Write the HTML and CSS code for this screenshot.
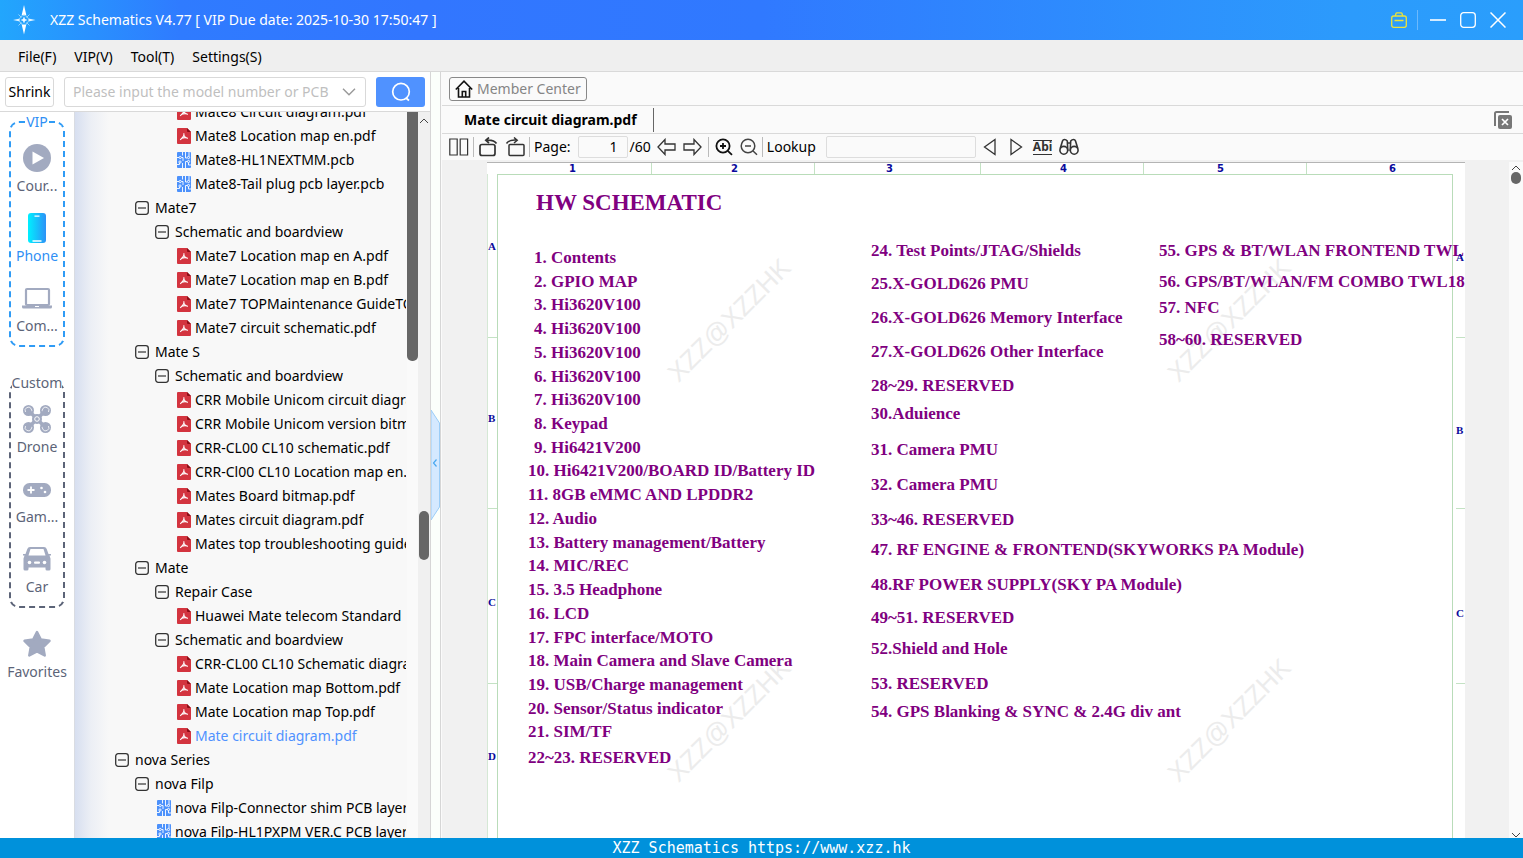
FILE: index.html
```html
<!DOCTYPE html>
<html lang="en">
<head>
<meta charset="utf-8">
<title>XZZ Schematics</title>
<link rel="stylesheet" href="styles.css">
</head>
<body>
<svg class="defs" aria-hidden="true">
  <symbol id="pdf" viewBox="0 0 14 16">
    <path d="M1 0h9l4 4v11a1 1 0 0 1-1 1H1a1 1 0 0 1-1-1V1a1 1 0 0 1 1-1z" fill="#d3343f"/>
    <path d="M10 0l4 4h-3a1 1 0 0 1-1-1z" fill="#8c0d16"/>
    <path d="M6.700 5.200c.8 1.500-.3 3.800-3.500 6.600M7 7.500c.6 1.500 1.800 2.600 3.800 3M4.800 10.200c1.800-.7 3.600-.8 5.500-.3" fill="none" stroke="#fff" stroke-width="1.100"/>
  </symbol>
  <symbol id="pcb" viewBox="0 0 14 16">
    <rect width="14" height="16" rx="1" fill="#4c91fb"/>
    <path d="M5.500 0v3.500M8.500 0v6H10M0 5.500h2M4.500 5.500H6V9M0 12.500h2.500V11M5.500 16v-5M8.500 16V9.500h2M11.500 10.500V13H14M12 4.500V0" fill="none" stroke="#fff" stroke-width=".9"/>
    <g fill="none" stroke="#fff" stroke-width=".9"><circle cx="3.200" cy="5.500" r="1.100"/><circle cx="3" cy="10" r="1.100"/><circle cx="11.500" cy="5.500" r="1.100"/><circle cx="11.500" cy="9.500" r="1.100"/></g>
  </symbol>
  <symbol id="fold" viewBox="0 0 14 14">
    <rect x=".7" y=".7" width="12.600" height="12.600" rx="2.500" fill="none" stroke="#333" stroke-width="1.300"/>
    <path d="M3 7h8" stroke="#333" stroke-width="1.200"/>
  </symbol>
</svg>

<header class="titlebar">
  <svg class="logo" viewBox="0 0 28 30" aria-hidden="true">
    <path d="M14 0l2.400 10.500c-1.500-.9-3.300-.9-4.800 0zM14 29.500l2.400-10.500c-1.500.9-3.300.9-4.800 0z" fill="#fff"/>
    <path d="M3 15l7-1.500v3zM25.500 15l-7-1.500v3z" fill="#dff3ff"/>
    <path d="M8.500 9.500l3 3M19.500 9.500l-3 3M8.500 20.500l3-3M19.500 20.500l-3-3" stroke="#8fd5ff"/>
    <circle cx="14" cy="15" r="4.500" fill="none" stroke="#8fd5ff"/>
    <path d="M14 12.500v5M11.500 15h5" stroke="#fff" stroke-width="1.500"/>
  </svg>
  <h1 class="title">XZZ Schematics V4.77 [ VIP Due date: 2025-10-30 17:50:47 ]</h1>
  <div class="window-tools">
    <button class="win" aria-label="Toolbox"><svg width="16" height="16" viewBox="0 0 16 16" fill="none" stroke="#ece33a" stroke-width="1.300"><rect x=".7" y="4" width="14.600" height="11.300" rx="2"/><path d="M4.300 4L5 1.500Q5.200.8 6 .8h4q.8 0 1 .7l.7 2.500M3.500 8.500h9"/></svg></button>
    <span class="win-rule"></span>
    <button class="win" aria-label="Minimize"><svg width="16" height="16" viewBox="0 0 16 16"><path d="M0 8h16" stroke="#fff" stroke-width="1.600"/></svg></button>
    <button class="win" aria-label="Maximize"><svg width="16" height="16" viewBox="0 0 16 16"><rect x=".7" y=".7" width="14.600" height="14.600" rx="3" fill="none" stroke="#fff" stroke-width="1.300"/></svg></button>
    <button class="win" aria-label="Close"><svg width="16" height="16" viewBox="0 0 16 16"><path d="M.5.500l15 15M15.500.500l-15 15" stroke="#fff" stroke-width="1.500"/></svg></button>
  </div>
</header>

<nav class="menubar" aria-label="Main menu">
  <button>File(F)</button><button>VIP(V)</button><button>Tool(T)</button><button>Settings(S)</button>
</nav>

<main class="workspace">
  <section class="browser">
    <form class="searchbar">
      <button type="button" class="shrink">Shrink</button>
      <div class="combo">
        <input type="text" aria-label="Model number or PCB" placeholder="Please input the model number or PCB">
        <svg width="14" height="8" viewBox="0 0 14 8" aria-hidden="true"><path d="M1 .8l6 6 6-6" fill="none" stroke="#999" stroke-width="1.400"/></svg>
      </div>
      <button type="submit" class="search" aria-label="Search"><svg width="20" height="20" viewBox="0 0 20 20" fill="none" stroke="#fff" stroke-width="1.700"><circle cx="10" cy="9.700" r="8.300"/><path d="M15 16l3 2.500"/></svg></button>
    </form>
    <div class="browser-body">
      <aside class="rail">
        <fieldset class="group group-vip">
          <legend>VIP</legend>
          <button class="cat"><svg viewBox="0 0 28 30"><circle cx="14" cy="15" r="14" fill="#a2aac0"/><path d="M9.500 8.500v13l11.500-6.500z" fill="#fff"/></svg>Cour...</button>
          <button class="cat active"><svg viewBox="0 0 28 30"><defs><linearGradient id="ph"><stop offset="0" stop-color="#00f0ff"/><stop offset="1" stop-color="#2c92f7"/></linearGradient></defs><rect x="5" y="0" width="18" height="30" rx="3" fill="url(#ph)"/><path d="M11.500 3.200h5M9.500 28h9" stroke="#fff" stroke-width="1.300"/></svg>Phone</button>
          <button class="cat"><svg viewBox="0 0 30 30"><rect x="4" y="6" width="23" height="16" rx="1" fill="none" stroke="#a2aac0" stroke-width="2.200"/><path d="M0 22.500h30v1.500a1.500 1.500 0 0 1-1.500 1.500h-27A1.500 1.500 0 0 1 0 24z" fill="#a2aac0"/><path d="M13 23.500h4" stroke="#fff"/></svg>Com...</button>
        </fieldset>
        <fieldset class="group group-custom">
          <legend>Custom</legend>
          <button class="cat"><svg viewBox="0 0 28 30"><g fill="#a2aac0"><circle cx="5.500" cy="6.500" r="5.500"/><circle cx="22.500" cy="6.500" r="5.500"/><circle cx="5.500" cy="23.500" r="5.500"/><circle cx="22.500" cy="23.500" r="5.500"/></g><g fill="none" stroke="#fff" stroke-width=".8"><path d="M2.500 8a3.300 3.300 0 1 1 5 1M25.500 8a3.300 3.300 0 1 0-5 1M2.500 22a3.300 3.300 0 1 0 5-1M25.500 22a3.300 3.300 0 1 1-5-1"/></g><path d="M5.500 6.500l17 17M22.500 6.500l-17 17" stroke="#a2aac0" stroke-width="3.600"/><circle cx="14" cy="15" r="5" fill="#a2aac0"/><circle cx="14" cy="15" r="2.300" fill="none" stroke="#fff"/></svg>Drone</button>
          <button class="cat"><svg viewBox="0 0 28 30"><rect x="0" y="9" width="28" height="14" rx="6.500" fill="#a2aac0"/><path d="M4.500 16h7M8 12.500v7" stroke="#fff" stroke-width="1.800"/><circle cx="18.500" cy="14" r="1.300" fill="#fff"/><circle cx="22" cy="18" r="1.300" fill="#fff"/></svg>Gam...</button>
          <button class="cat"><svg viewBox="0 0 28 30"><path d="M7 3h14q2 0 2.700 2l1.800 5h2.500v1.500h-1.500l1 3V25q0 1.500-1.500 1.500h-2Q22.500 26.500 22.500 25v-1.500h-17V25q0 1.500-1.500 1.500H2Q.5 26.500.5 25V14.500l1-3H0V10h2.500l1.800-5Q5 3 7 3z" fill="#a2aac0"/><path d="M7.500 5h13l2 6.500h-17z" fill="#fff"/><circle cx="6.500" cy="18.500" r="1.800" fill="#fff"/><circle cx="21.500" cy="18.500" r="1.800" fill="#fff"/><rect x="11" y="17.500" width="6" height="2.200" rx="1" fill="#fff"/></svg>Car</button>
        </fieldset>
        <button class="cat favorites"><svg viewBox="0 0 28 30"><path d="M14 3l3.800 7.600 8.700 1.200-6.300 6.200 1.500 8.500-7.700-4-7.700 4 1.500-8.500-6.300-6.200 8.700-1.200z" fill="#a2aac0" stroke="#a2aac0" stroke-width="2.500" stroke-linejoin="round"/></svg>Favorites</button>
      </aside>

      <div class="tree-pane">
        <ul class="tree">
          <li class="d3"><svg class="file"><use href="#pdf"/></svg>Mate8 Circuit diagram.pdf</li>
          <li class="d3"><svg class="file"><use href="#pdf"/></svg>Mate8 Location map en.pdf</li>
          <li class="d3"><svg class="file"><use href="#pcb"/></svg>Mate8-HL1NEXTMM.pcb</li>
          <li class="d3"><svg class="file"><use href="#pcb"/></svg>Mate8-Tail plug pcb layer.pcb</li>
          <li class="d1"><svg class="fold"><use href="#fold"/></svg>Mate7</li>
          <li class="d2"><svg class="fold"><use href="#fold"/></svg>Schematic and boardview</li>
          <li class="d3"><svg class="file"><use href="#pdf"/></svg>Mate7 Location map en A.pdf</li>
          <li class="d3"><svg class="file"><use href="#pdf"/></svg>Mate7 Location map en B.pdf</li>
          <li class="d3"><svg class="file"><use href="#pdf"/></svg>Mate7 TOPMaintenance GuideTOP.pdf</li>
          <li class="d3"><svg class="file"><use href="#pdf"/></svg>Mate7 circuit schematic.pdf</li>
          <li class="d1"><svg class="fold"><use href="#fold"/></svg>Mate S</li>
          <li class="d2"><svg class="fold"><use href="#fold"/></svg>Schematic and boardview</li>
          <li class="d3"><svg class="file"><use href="#pdf"/></svg>CRR Mobile Unicom circuit diagram.pdf</li>
          <li class="d3"><svg class="file"><use href="#pdf"/></svg>CRR Mobile Unicom version bitmap.pdf</li>
          <li class="d3"><svg class="file"><use href="#pdf"/></svg>CRR-CL00 CL10 schematic.pdf</li>
          <li class="d3"><svg class="file"><use href="#pdf"/></svg>CRR-Cl00 CL10 Location map en.pdf</li>
          <li class="d3"><svg class="file"><use href="#pdf"/></svg>Mates Board bitmap.pdf</li>
          <li class="d3"><svg class="file"><use href="#pdf"/></svg>Mates circuit diagram.pdf</li>
          <li class="d3"><svg class="file"><use href="#pdf"/></svg>Mates top troubleshooting guide.pdf</li>
          <li class="d1"><svg class="fold"><use href="#fold"/></svg>Mate</li>
          <li class="d2"><svg class="fold"><use href="#fold"/></svg>Repair Case</li>
          <li class="d3"><svg class="file"><use href="#pdf"/></svg>Huawei Mate telecom Standard</li>
          <li class="d2"><svg class="fold"><use href="#fold"/></svg>Schematic and boardview</li>
          <li class="d3"><svg class="file"><use href="#pdf"/></svg>CRR-CL00 CL10 Schematic diagram.pdf</li>
          <li class="d3"><svg class="file"><use href="#pdf"/></svg>Mate Location map Bottom.pdf</li>
          <li class="d3"><svg class="file"><use href="#pdf"/></svg>Mate Location map Top.pdf</li>
          <li class="d3 current"><svg class="file"><use href="#pdf"/></svg>Mate circuit diagram.pdf</li>
          <li class="d0"><svg class="fold"><use href="#fold"/></svg>nova Series</li>
          <li class="d1"><svg class="fold"><use href="#fold"/></svg>nova Filp</li>
          <li class="d2"><svg class="file"><use href="#pcb"/></svg>nova Filp-Connector shim PCB layer.pcb</li>
          <li class="d2"><svg class="file"><use href="#pcb"/></svg>nova Filp-HL1PXPM VER.C PCB layer.pcb</li>
        </ul>
      </div>
      <div class="scroll-inner"></div>
      <div class="scroll-outer">
        <svg width="10" height="6" viewBox="0 0 10 6"><path d="M1 5l4-4 4 4" fill="none" stroke="#444"/></svg>
        <span class="thumb"></span>
      </div>
    </div>
  </section>

  <div class="splitter">
    <button class="collapse" aria-label="Collapse panel"><svg width="9" height="110" viewBox="0 0 9 110"><path d="M0 0l8.500 13v84L0 110z" fill="#d5e9ff" stroke="#9bcdf7"/><path d="M5.500 49.500l-3 3.500 3 3.500" fill="none" stroke="#4aa8f0" stroke-width="1.200"/></svg></button>
  </div>

  <section class="viewer">
    <div class="memberbar">
      <button class="member"><svg width="18" height="18" viewBox="0 0 18 18" fill="none" stroke="#111" stroke-width="1.600"><path d="M.8 9.500L9 1.200l8.200 8.300M3.500 8v9h11V8M7.300 17v-5.500h3.400V17"/></svg>Member Center</button>
    </div>
    <div class="tabs">
      <button class="tab">Mate circuit diagram.pdf</button>
      <button class="tab-close" aria-label="Close all tabs"><svg width="18" height="18" viewBox="0 0 18 18"><path d="M1 15V2.500Q1 1 2.500 1H15" fill="none" stroke="#777" stroke-width="2"/><rect x="4" y="4" width="14" height="14" rx="2" fill="#777"/><path d="M8 8l6 6M14 8l-6 6" stroke="#fff" stroke-width="1.700"/></svg></button>
    </div>
    <div class="toolbar">
      <button class="tool" aria-label="Two pages"><svg width="20" height="18" viewBox="0 0 20 18" fill="none" stroke="#333" stroke-width="1.200"><path d="M.8 1h7.400v16H.8zM11.200 1h7.400v16h-7.400z"/></svg></button>
      <span class="rule"></span>
      <button class="tool" aria-label="Rotate left"><svg width="20" height="20" viewBox="0 0 20 20" fill="none" stroke="#333" stroke-width="1.700"><rect x="2" y="7.500" width="15" height="11" rx="2"/><path d="M18.500 6.500Q16 2.500 8 3.200M11 .5L7.800 3.200l3.200 2.800"/></svg></button>
      <button class="tool" aria-label="Rotate right"><svg width="20" height="20" viewBox="0 0 20 20" fill="none" stroke="#333" stroke-width="1.500"><rect x="4" y="7.500" width="15" height="11" rx="1"/><path d="M1.500 6.500Q4 2.500 12 3.200M9 .5l3.200 2.700L9 6"/></svg></button>
      <span class="rule"></span>
      <label class="page-label" for="page">Page:</label>
      <input class="page" id="page" type="text" value="1">
      <span class="total">/60</span>
      <button class="tool" aria-label="Previous page"><svg width="19" height="18" viewBox="0 0 19 18" fill="none" stroke="#333" stroke-width="1.300"><path d="M1 9l7-7.500V6h10v6H8v4.500z"/></svg></button>
      <button class="tool" aria-label="Next page"><svg width="19" height="18" viewBox="0 0 19 18" fill="none" stroke="#333" stroke-width="1.300"><path d="M18 9l-7-7.500V6H1v6h10v4.500z"/></svg></button>
      <span class="rule rule-wide"></span>
      <button class="tool" aria-label="Zoom in"><svg width="18" height="18" viewBox="0 0 18 18" fill="none" stroke="#111" stroke-width="1.800"><circle cx="8" cy="8" r="6.600"/><path d="M12.800 12.800l4.200 4M5 8h6M8 5v6"/></svg></button>
      <button class="tool" aria-label="Zoom out"><svg width="18" height="18" viewBox="0 0 18 18" fill="none" stroke="#444" stroke-width="1.500"><circle cx="8" cy="8" r="6.800"/><path d="M12.800 12.800l4.200 4M5 8h6"/></svg></button>
      <span class="rule"></span>
      <label class="lookup-label" for="lookup">Lookup</label>
      <input class="lookup" id="lookup" type="text">
      <button class="tool" aria-label="Find previous"><svg width="14" height="18" viewBox="0 0 14 18"><path d="M12 1.500v15L1.500 9z" fill="none" stroke="#333" stroke-width="1.300"/></svg></button>
      <button class="tool find-next" aria-label="Find next"><svg width="14" height="18" viewBox="0 0 14 18"><path d="M2 1.500v15L12.500 9z" fill="none" stroke="#333" stroke-width="1.300"/></svg></button>
      <button class="tool whole-word">Abi</button>
      <button class="tool" aria-label="Find"><svg width="20" height="18" viewBox="0 0 20 18" fill="none" stroke="#333" stroke-width="1.600"><circle cx="4.800" cy="12.300" r="3.900"/><circle cx="15.200" cy="12.300" r="3.900"/><path d="M1.200 10.500L3.500 3q.5-1.500 2-1.500T8.300 3l.5 10M18.800 10.500L16.500 3q-.5-1.500-2-1.500T11.700 3l-.5 10M8.500 5h3"/></svg></button>
    </div>
    <div class="canvas">
      <article class="sheet">
        <div class="cols"><span>1</span><span>2</span><span>3</span><span>4</span><span>5</span><span>6</span></div>
        <div class="rows rows-left"><span>A</span><span>B</span><span>C</span><span>D</span></div>
        <div class="frame">
          <span class="mark m1">XZZ@XZZHK</span><span class="mark m2">XZZ@XZZHK</span><span class="mark m3">XZZ@XZZHK</span><span class="mark m4">XZZ@XZZHK</span>
          <h2 class="sheet-title">HW SCHEMATIC</h2>
          <div class="contents">
            <div class="list-a">
              <ul class="even">
                <li class="one">1. Contents</li><li class="one">2. GPIO MAP</li><li class="one">3. Hi3620V100</li><li class="one">4. Hi3620V100</li><li class="one">5. Hi3620V100</li><li class="one">6. Hi3620V100</li><li class="one">7. Hi3620V100</li><li class="one">8. Keypad</li><li class="one">9. Hi6421V200</li>
                <li>10. Hi6421V200/BOARD ID/Battery ID</li><li>11. 8GB eMMC AND LPDDR2</li><li>12. Audio</li><li>13. Battery management/Battery</li><li>14. MIC/REC</li><li>15. 3.5 Headphone</li><li>16. LCD</li><li>17. FPC interface/MOTO</li><li>18. Main Camera and Slave Camera</li><li>19. USB/Charge management</li><li>20. Sensor/Status indicator</li><li>21. SIM/TF</li>
              </ul>
              <p>22~23. RESERVED</p>
            </div>
            <ul class="list-b">
              <li>24. Test Points/JTAG/Shields</li><li>25.X-GOLD626 PMU</li><li>26.X-GOLD626 Memory Interface</li><li>27.X-GOLD626 Other Interface</li><li>28~29. RESERVED</li><li>30.Aduience</li><li>31. Camera PMU</li><li>32. Camera PMU</li><li>33~46. RESERVED</li><li>47. RF ENGINE &amp; FRONTEND(SKYWORKS PA Module)</li><li>48.RF POWER SUPPLY(SKY PA Module)</li><li>49~51. RESERVED</li><li>52.Shield and Hole</li><li>53. RESERVED</li><li>54. GPS Blanking &amp; SYNC &amp; 2.4G div ant</li>
            </ul>
            <ul class="list-c">
              <li>55. GPS &amp; BT/WLAN FRONTEND TWL</li><li>56. GPS/BT/WLAN/FM COMBO TWL18</li><li>57. NFC</li><li>58~60. RESERVED</li>
            </ul>
          </div>
        </div>
        <div class="rows rows-right"><span>A</span><span>B</span><span>C</span><span></span></div>
      </article>
      <div class="view-scroll">
        <svg width="10" height="6" viewBox="0 0 10 6"><path d="M1 5l4-4 4 4" fill="none" stroke="#444"/></svg>
        <span class="dot"></span>
        <svg class="down" width="10" height="6" viewBox="0 0 10 6"><path d="M1 1l4 4 4-4" fill="none" stroke="#444"/></svg>
      </div>
    </div>
  </section>
</main>

<footer class="status">XZZ Schematics https://www.xzz.hk</footer>
</body>
</html>
```
FILE: styles.css
```css
* { box-sizing: border-box; }
html, body { height: 100%; }
body {
  margin: 0;
  display: flex;
  flex-direction: column;
  overflow: hidden;
  background: #fafafa;
  color: #000;
  font: 14px/24px "Noto Sans", "Open Sans", sans-serif;
}
button, input { font: inherit; color: inherit; }
button { padding: 0; border: 0; background: none; cursor: pointer; white-space: nowrap; }
ul { margin: 0; padding: 0; list-style: none; }
svg { display: block; flex: none; }
.defs { position: absolute; width: 0; height: 0; }

/* Title bar */
.titlebar {
  flex: none;
  display: flex;
  align-items: center;
  height: 40px;
  padding: 0 17px 0 10px;
  background: linear-gradient(90deg, #22a6fd 0, #2f7bff 180px, #3276ff 420px, #3079ff 760px, #2c9bfc 1350px, #2a9efc 100%);
  color: #fff;
}
.logo { width: 28px; height: 30px; }
.title { flex: 1; margin: 0 0 0 12px; font-size: 14px; font-weight: 400; }
.window-tools { display: flex; align-items: center; gap: 14px; }
.win-rule { width: 1px; height: 20px; margin: 0 -2px 0 -4px; background: #6cb9fd; }

/* Menu bar */
.menubar {
  flex: none;
  display: flex;
  gap: 18px;
  height: 32px;
  padding: 2px 18px 0;
  border-bottom: 1px solid #d9d9d9;
  background: #efefef;
}

.workspace { flex: 1; display: flex; min-height: 0; }

/* Left panel */
.browser { flex: none; width: 431px; display: flex; flex-direction: column; border-right: 1px solid #d6d6d6; }
.searchbar {
  flex: none;
  display: flex;
  align-items: center;
  gap: 10px;
  height: 40px;
  padding: 0 5px;
  border-bottom: 1px solid #d9d9d9;
  background: #fff;
}
.shrink { width: 49px; height: 30px; border: 1px solid #d9d9d9; border-radius: 3px; background: #fff; }
.combo {
  flex: 1;
  display: flex;
  align-items: center;
  gap: 6px;
  min-width: 0;
  height: 30px;
  padding: 0 9px 0 8px;
  border: 1px solid #d9d9d9;
  border-radius: 3px;
}
.combo input { flex: 1; min-width: 0; padding: 0; border: 0; outline: 0; background: none; }
.combo input::placeholder { color: #bfbfbf; opacity: 1; }
.search { display: grid; place-items: center; width: 49px; height: 30px; border-radius: 3px; background: #5092ff; }
.browser-body { flex: 1; display: flex; min-height: 0; }

.rail { flex: none; width: 74px; padding: 0 9px; background: #fff; color: #5c6478; }
.group { display: flex; flex-direction: column; min-width: 0; margin: 0; padding: 0 0 3px; border: 2px dashed; border-radius: 10px; }
.group legend { margin: 0 auto; padding: 0; line-height: 20px; color: inherit; }
.group-vip { border-color: #2f9bf5; }
.group-vip legend { color: #2f8ff5; }
.group-custom { margin-top: 26px; border-color: #5c6478; }
.cat { display: flex; flex-direction: column; align-items: center; gap: 1px; width: 100%; height: 70px; padding-top: 11px; }
.cat svg { width: 30px; height: 30px; }
.active { color: #2f8ff5; }
.favorites { margin-top: 10px; }

.tree-pane { flex: 1; min-width: 0; overflow: hidden; padding-left: 40px; border-left: 1px solid #d9dce2; background: linear-gradient(90deg, #d7dff0 0, #eceff5 16px, #f8f8f8 34px); }
.tree { margin-top: -12px; }
.tree li { display: flex; align-items: center; gap: 6px; height: 24px; margin-right: 1px; overflow: hidden; white-space: nowrap; }
.d1 { padding-left: 20px; }
.d2 { padding-left: 40px; }
.d3 { padding-left: 60px; }
.fold { width: 14px; height: 14px; }
.file { width: 14px; height: 16px; margin: 0 -2px 0 2px; }
.current { color: #5092ff; }
.scroll-inner { flex: none; width: 11px; height: 249px; border-radius: 0 0 5px 5px; background: #666; }
.scroll-outer { flex: none; display: flex; flex-direction: column; align-items: center; width: 12px; padding-top: 6px; background: #f0f0f0; }
.thumb { width: 10px; height: 49px; margin-top: 387px; border-radius: 5px; background: #666; }

/* Splitter */
.splitter { flex: none; display: flex; align-items: center; width: 10px; border-right: 1px solid #d6d6d6; background: #fbfffb; }
.collapse { margin-top: 20px; }

/* Viewer */
.viewer { flex: 1; min-width: 0; display: flex; flex-direction: column; padding-left: 1px; }
.memberbar, .tabs { flex: none; display: flex; align-items: center; border-bottom: 1px solid #d9d9d9; }
.memberbar { height: 34px; padding-left: 7px; }
.member { display: flex; align-items: center; gap: 4px; height: 24px; padding: 0 5px; border: 1px solid #888; border-radius: 3px; color: #858585; }
.tabs { height: 28px; justify-content: space-between; padding-right: 11px; }
.tab { height: 24px; padding: 0 16px 0 22px; border-right: 1px solid #666; font-weight: 700; }
.toolbar { flex: none; display: flex; align-items: center; height: 26px; padding-left: 7px; gap: 7px; }
.tool { display: grid; place-items: center; height: 24px; }
.rule { width: 1px; height: 20px; margin: 0 -3px; background: #bbb; }
.rule-wide { margin: 0 -1px; }
.page, .lookup { height: 22px; padding: 0 9px; border: 1px solid #ddd; border-radius: 2px; background: #fafafa; }
.page { width: 50px; text-align: right; }
.total { margin: 0 -1px 0 -5px; }
.lookup-label { min-width: 52px; }
.lookup { width: 150px; }
.find-next { margin: 0 3px 0 5px; }
.whole-word { height: 15px; border: solid #333; border-width: 1px 0; color: #333; font-size: 12px; line-height: 12px; font-weight: 700; }

.canvas { flex: 1; display: flex; min-height: 0; padding-top: 2px; background: #f1f1f1; }
.sheet {
  flex: 1;
  display: grid;
  grid-template-columns: 10px minmax(0, 1fr) 12px;
  grid-template-rows: 11px minmax(0, 1fr);
  min-width: 0;
  margin: 0 44px 0 45px;
  overflow: hidden;
  border-top: 1px solid #b4b4b4;
  background: #fff;
}
.cols, .rows { color: #0a0a9c; font: 700 11px/12px "Liberation Serif", serif; }
.cols { grid-column: 1 / -1; display: grid; grid-template-columns: 165fr 163fr 166fr 163fr 163fr 158fr; font: 700 10px/11px "DejaVu Sans", sans-serif; }
.cols span { padding-left: 79px; border-right: 1px solid #c4e2c4; }
.cols span:nth-child(1) { padding-left: 82px; }
.cols span:nth-child(3) { padding-left: 71px; }
.cols span:nth-child(5) { padding-left: 73px; }
.cols span:nth-child(6) { padding-left: 82px; border: 0; }
.rows { display: grid; grid-template-rows: 164px 171px 175px minmax(0, 1fr); }
.rows span { padding-top: 66px; border-bottom: 1px solid #c4e2c4; }
.rows span:nth-child(2) { padding-top: 74px; }
.rows span:nth-child(3) { padding-top: 87px; }
.rows span:last-child { border: 0; }
.rows-left { border-left: 1px solid #d5e8d5; }
.rows-right { z-index: 1; padding-left: 3px; }
.rows-right span { padding-top: 77px; }
.rows-right span:nth-child(2) { padding-top: 86px; }
.rows-right span:nth-child(3) { padding-top: 98px; }
.frame {
  position: relative;
  border: solid #b9dcb9;
  border-width: 1px 1px 0;
  color: #800080;
  font: 700 17px/24px "Liberation Serif", serif;
  white-space: nowrap;
}
.sheet-title { position: relative; margin: 14px 0 29px 38px; font-size: 23px; line-height: 28px; }
.contents { position: relative; display: grid; grid-template-columns: 343px 288px minmax(0, 1fr); padding-left: 30px; }
.even { display: flex; flex-direction: column; height: 498px; }
.even li { flex: 1; min-height: 0; }
.one { padding-left: 6px; }
.list-a p { margin: 2px 0 0; }
.list-b, .list-c { display: grid; align-content: start; margin-top: -7px; }
.list-b { grid-template-rows: 33px 34px 34px 34px 28px 36px 35px 35px 30px 35px 33px 31px 35px 28px 24px; }
.list-c { grid-template-rows: 31px 26px 32px 24px; }
.mark {
  position: absolute;
  width: 170px;
  color: #ececec;
  font: 400 26px/30px "Liberation Sans", sans-serif;
  text-align: center;
  transform: rotate(-45deg);
}
.m1, .m3 { left: 146px; }
.m2, .m4 { left: 646px; }
.m1, .m2 { top: 130px; }
.m3, .m4 { top: 530px; }
.view-scroll { flex: none; display: flex; flex-direction: column; align-items: center; gap: 1px; width: 14px; padding-top: 3px; background: #fafafa; }
.dot { width: 10px; height: 12px; border-radius: 5px; background: #666; }
.down { margin-top: auto; }

/* Status bar */
.status {
  flex: none;
  height: 20px;
  background: #0091db;
  color: #fff;
  font: 15px/20px "DejaVu Sans Mono", monospace;
  text-align: center;
}
```
